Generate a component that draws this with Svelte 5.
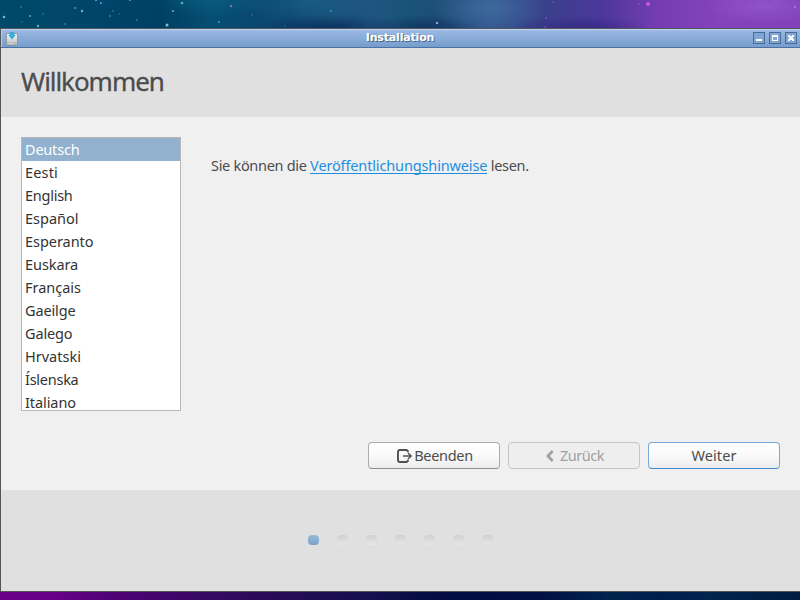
<script>
  // Each entry holds the language name and its tracking in pixels.
  const languages = [
    ['Deutsch', -.2], ['Eesti', .15], ['English', -.25], ['Español', 0], ['Esperanto', -.04], ['Euskara', -.07],
    ['Français', -.03], ['Gaeilge', -.13], ['Galego', -.15], ['Hrvatski', 0], ['Íslenska', -.26], ['Italiano', -.08]
  ];
  const steps = [0, 1, 2, 3, 4, 5, 6];
  let selected = $state(0);
  const stars = [
    [4, 17, 1.3, '#7cb0e8'], [21, 7, .8, '#4f9bb3'], [30, 16, 1.1, '#5c9fc4'], [43, 14, .8, '#3e8ba8'],
    [38, 26, 1.2, '#68a9b8'], [65, 24, .8, '#579dab'], [75, 8, 1, '#4a9ab0'], [82, 11, 1.2, '#7ab3c4'],
    [96, 0, 1, '#76b0cc'], [101, 3, 1.1, '#5e8fdc'], [110, 16, .9, '#3d88a0'], [113, 11, .7, '#4da1b5'],
    [130, 0, 1, '#62a2b9'], [137, 20, .8, '#5696b0'], [167, 25, 1.5, '#86bccd'], [173, 11, 1.1, '#67adbd'],
    [182, 3, 1.3, '#5fadb9'], [219, 22, 1.1, '#4d94aa'], [231, 6, 1.2, '#876fa4'], [252, 15, .8, '#4f6f99'],
    [331, 11, 1, '#259ca6'], [437, 23, 1.2, '#91a5cf'], [553, 2, .7, '#6a80c4'], [546, 18, .8, '#7864b4'],
    [648, 4, 2, '#cc58df'], [639, 4, .8, '#b64ac8'], [776, 0, .8, '#c16fdf'], [795, 7, 1.1, '#bb78da'],
    [545, 27, .8, '#8265bd'], [22, 22, .7, '#347e9c'], [119, 14, .7, '#367e9b'], [285, 26, .7, '#467498']
  ];
</script>

<div class="desktop">
  <div class="sky">
    <svg width="800" height="28" aria-hidden="true">
      {#each stars as [x, y, r, fill]}<circle cx={x} cy={y} {r} {fill} />{/each}
    </svg>
  </div>
  <main class="window">
    <div class="titlebar">
      <svg class="app-icon" width="14" height="14" viewBox="0 0 14 14" aria-hidden="true">
        <defs>
          <linearGradient id="disk" x1="0" y1="0" x2="0" y2="1"><stop offset="0" stop-color="#f3f3f2" /><stop offset="1" stop-color="#bfc2c4" /></linearGradient>
        </defs>
        <path d="M1.5 1.5H12.5V13H1.5Z" fill="url(#disk)" stroke="#858e98" stroke-width=".8" />
        <path d="M2 10.5H12V12.5H2Z" fill="#d4d5d4" stroke="#9fa4a7" stroke-width=".5" />
        <path d="M5.2 .5H8.8V3H10.2L7 7.2 3.8 3H5.2Z" fill="#28b6e3" stroke="#168bbb" stroke-width=".4" />
        <rect x="9" y="11" width="2" height="1" fill="#9fc997" />
      </svg>
      <span class="caption">Installation</span>
      <div class="controls">
        <svg width="12" height="12" shape-rendering="crispEdges"><rect x=".5" y=".5" width="11" height="11" /><path d="M3 7H9V9H3Z" /></svg>
        <svg width="12" height="12" shape-rendering="crispEdges"><rect x=".5" y=".5" width="11" height="11" /><path fill-rule="evenodd" d="M3 3H9V9H3ZM4 5V8H8V5Z" /></svg>
        <svg width="12" height="12" shape-rendering="crispEdges"><rect x=".5" y=".5" width="11" height="11" /><path d="M3 3H5V4H7V3H9V5H8V7H9V9H7V8H5V9H3V7H4V5H3Z" /></svg>
      </div>
    </div>
    <header><h1>Willkommen</h1></header>
    <section class="content">
      <div class="row">
        <ul class="list">
          {#each languages as [name, tracking], i}
            <li><button class:selected={i === selected} style:letter-spacing="{tracking}px" onclick={() => (selected = i)}>{name}</button></li>
          {/each}
        </ul>
        <p>Sie können die <a href="#notes">Veröffentlichungshinweise</a> lesen.</p>
      </div>
      <div class="actions">
        <button class="btn">
          <svg width="16" height="14" viewBox="0 0 16 14" aria-hidden="true">
            <path d="M11 3.2Q11 1 9 1H3Q1 1 1 3V11Q1 13 3 13H9Q11 13 11 10.8" fill="none" stroke="#505050" stroke-width="1.9" />
            <path d="M6 7H14M11 4 14.2 7 11 10" fill="none" stroke="#505050" stroke-width="1.4" />
          </svg><span class="quit">Beenden</span>
        </button>
        <button class="btn disabled" disabled>
          <svg class="chev" width="8" height="12" viewBox="0 0 8 12" aria-hidden="true"><path d="M6.7 1 1.9 6 6.7 11" fill="none" stroke="#a0a0a0" stroke-width="2.7" /></svg><span class="back">Zurück</span>
        </button>
        <button class="btn primary"><span class="next">Weiter</span></button>
      </div>
    </section>
    <footer>
      {#each steps as s}<i class:active={s === 0}></i>{/each}
    </footer>
  </main>
  <div class="ground"></div>
</div>

<style>
  :global(body) { margin: 0; overflow: hidden; }
  .desktop { width: 800px; height: 600px; display: flex; flex-direction: column; overflow: hidden; font-family: "Noto Sans", "Open Sans", sans-serif; font-size: 14.5px; color: #4c4c4c; }
  .sky {
    height: 28px; flex: none;
    background:
      radial-gradient(ellipse 60px 18px at 210px 0, #0b7b9355, transparent),
      radial-gradient(ellipse 70px 25px at 310px 2px, #2676946c, transparent),
      radial-gradient(ellipse 60px 24px at 490px 8px, #4879aa88, transparent),
      radial-gradient(ellipse 70px 14px at 330px 28px, #062652aa, transparent),
      radial-gradient(ellipse 55px 14px at 425px 28px, #082a57aa, transparent),
      radial-gradient(ellipse 70px 12px at 580px 28px, #30217caa, transparent),
      radial-gradient(ellipse 60px 18px at 765px 6px, #985cd0aa, transparent),
      linear-gradient(90deg, #004967 0, #00466b 90px, #003f64 160px, #064d72 210px, #0c4470 290px, #1f5480 370px, #195478 405px, #1f4d79 440px, #32588f 490px, #38418a 540px, #4b379a 600px, #763db3 660px, #8442bb 720px, #8141b9 800px);
  }
  .sky svg { display: block; }
  .window { height: 564px; flex: none; box-sizing: border-box; display: flex; flex-direction: column; border: solid #55545b; border-width: 1px 0 1px 1px; background: #e0e0e0; }
  .titlebar { height: 19px; box-sizing: border-box; flex: none; display: grid; grid-template-columns: 50px 1fr 50px; align-items: center; background: linear-gradient(#9bb9e3, #769dcd); border-top: 1px solid #bed3f1; border-bottom: 1px solid #4b71a5; box-shadow: inset 1px 0 #b7cdec; }
  .app-icon { margin-left: 4px; }
  .caption { text-align: center; font: bold 11px/16px "DejaVu Sans", sans-serif; letter-spacing: -.17px; color: #fff; text-shadow: 1px 1px #4b6789; padding: 0 1px 2px 0; }
  .controls { display: flex; gap: 4px; justify-content: flex-end; padding-right: 3px; position: relative; top: -1px; }
  .controls svg { display: block; }
  .controls rect { fill: #82a5d1; stroke: #466c9a; }
  .controls path { fill: #f5f8fc; }
  header { height: 69px; flex: none; box-sizing: border-box; padding: 16px 0 0 20px; }
  h1 { margin: 0; font-weight: 400; font-size: 26px; line-height: 35px; letter-spacing: -1.05px; color: #4c4c4c; -webkit-text-stroke: .3px #4c4c4c; }
  .content { height: 373px; flex: none; box-sizing: border-box; padding: 20px 20px 0; background: #f0f0f0; }
  .row { display: flex; gap: 30px; }
  .list { width: 160px; height: 274px; box-sizing: border-box; margin: 0; padding: 0; border: 1px solid #b8b8b8; background: #fff; list-style: none; overflow: hidden; }
  .list button { display: block; width: 100%; height: 23px; border: 0; padding: 0 3px 1px; background: none; font: inherit; line-height: 22px; text-align: left; color: #333; }
  .list li:last-child, .list li:last-child button { height: 19px; line-height: 22px; }
  .list .selected { background: #91b1cf; color: #fff; }
  p { margin: 17px 0 0; line-height: 23px; white-space: nowrap; letter-spacing: -.3px; }
  a { color: #1d8fe1; letter-spacing: -.14px; text-decoration: none; display: inline-block; line-height: 18px; height: 18px; box-sizing: border-box; border-bottom: 1px solid #1d8fe1; }
  .actions { display: flex; justify-content: flex-end; gap: 8px; margin-top: 31px; }
  .btn { width: 132px; height: 27px; box-sizing: border-box; display: flex; align-items: center; justify-content: center; padding: 0; border: 1px solid #adadad; border-bottom-color: #8f8f8f; border-radius: 4px; background: linear-gradient(#fff, #fafafa 50%, #ececec); font: inherit; line-height: 23px; color: #4c4c4c; }
  .btn svg { margin: 0 1px 0 2px; flex: none; }
  .btn .chev { margin-right: 6px; }
  .quit { letter-spacing: -.3px; }
  .back { letter-spacing: -.45px; }
  .next { letter-spacing: .1px; }
  .disabled { background: #eee; border-color: #c5c5c5; color: #a0a0a0; }
  .primary { border-color: #74a9da; border-bottom-color: #428bd0; }
  footer { flex: 1; display: flex; justify-content: center; gap: 18px; padding-top: 45px; }
  footer i { width: 11px; height: 10px; border-radius: 4px; background: linear-gradient(#d0d0d0, #e7e7e7); }
  footer .active { background: linear-gradient(#9abbd7, #79a1c6); }
  .ground { flex: 1; background: linear-gradient(90deg, #6a008a 0, #68008a 50px, #500076 110px, #390864 195px, #220c53 300px, #13104e 375px, #030b42 440px, #011044 540px, #00234c 610px, #001e4b 660px, #00244d 710px, #001b42 800px); }
</style>
